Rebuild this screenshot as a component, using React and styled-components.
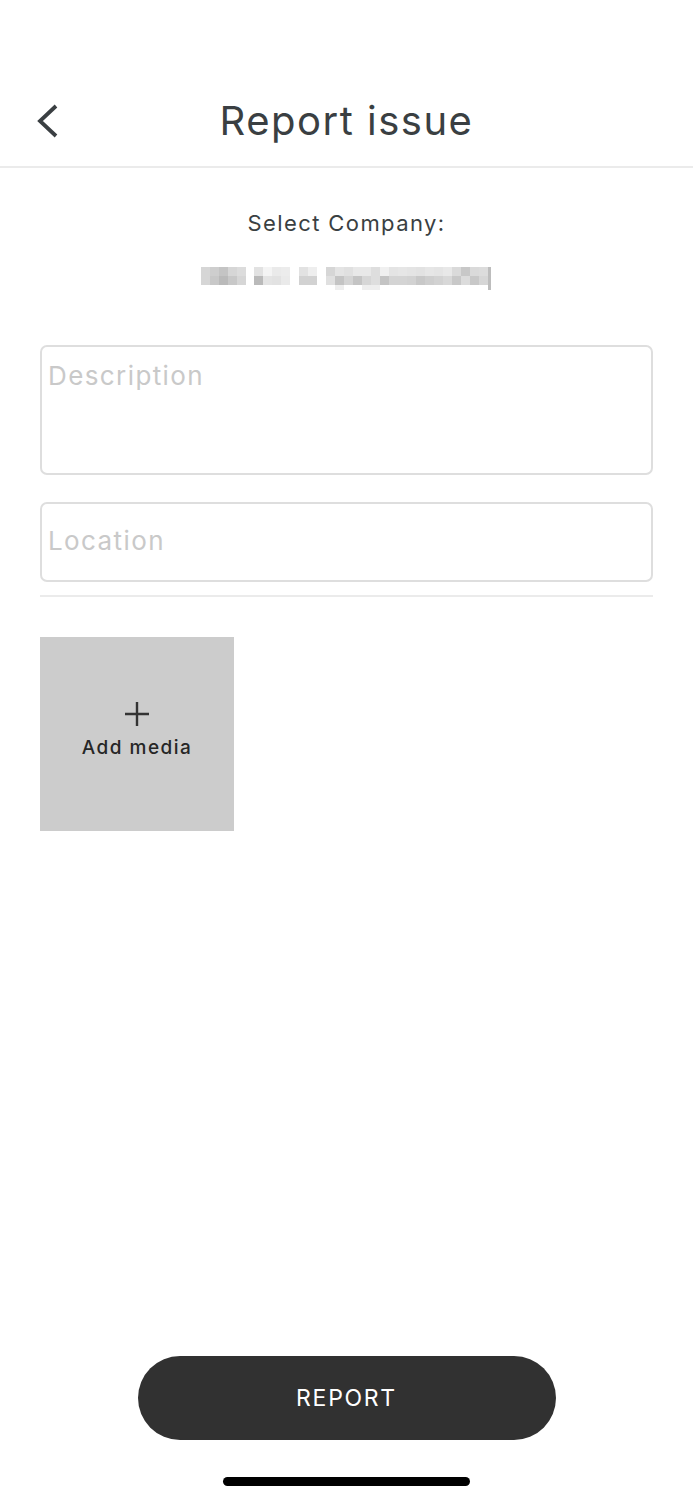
import React from "react";
import styled, { createGlobalStyle } from "styled-components";

const Global = createGlobalStyle`
  html, body { margin: 0; padding: 0; background: #fff; }
  body { font-family: "Inter", "Noto Sans", sans-serif; }
  * { box-sizing: border-box; }
`;

const Screen = styled.div`
  width: 693px;
  height: 1500px;
  display: flex;
  flex-direction: column;
  background: #fff;
  color: #3a3f42;
`;

const Header = styled.header`
  height: 168px;
  padding-top: 80px;
  border-bottom: 2px solid #ebebeb;
  display: grid;
  grid-template-columns: 80px 1fr 80px;
  align-items: center;
`;

const BackButton = styled.button`
  border: 0;
  background: none;
  padding: 0 0 4px 36px;
  display: flex;
  align-items: center;
  cursor: pointer;
`;

const Title = styled.h1`
  margin: 0 0 6px;
  text-align: center;
  font-weight: 400;
  font-size: 40px;
  letter-spacing: 1.5px;
  color: #3a3f42;
`;

const Body = styled.main`
  flex: 1;
  display: flex;
  flex-direction: column;
  padding: 40px 40px 0;
`;

const Label = styled.div`
  text-align: center;
  font-size: 22px;
  line-height: 30px;
  color: #3a3f42;
  letter-spacing: 1.4px;
`;

const MosaicWrap = styled.div`
  display: flex;
  justify-content: center;
  margin-top: 28px;
  margin-left: -2px;
`;

const Field = styled.div`
  border: 2px solid #dedede;
  border-radius: 7px;
  height: ${(p) => p.$h}px;
  padding: ${(p) => p.$pt}px 6px 0;
  font-size: 26px;
  color: #c9c9c9;
  letter-spacing: 1.4px;
  margin-top: ${(p) => p.$mt}px;
`;

const Rule = styled.div`
  height: 2px;
  background: #ebebeb;
  margin-top: 13px;
`;

const MediaTile = styled.button`
  margin-top: 40px;
  width: 194px;
  height: 194px;
  border: 0;
  background: #cccccc;
  display: flex;
  flex-direction: column;
  align-items: center;
  justify-content: center;
  gap: 9px;
  padding: 0 0 8px;
  font-family: inherit;
  font-size: 19px;
  font-weight: 500;
  color: #262626;
  letter-spacing: 1.5px;
`;

const Footer = styled.footer`
  display: flex;
  flex-direction: column;
  align-items: center;
  padding-bottom: 14px;
`;

const ReportButton = styled.button`
  width: 418px;
  height: 84px;
  border-radius: 42px;
  border: 0;
  background: #313131;
  color: #fff;
  font-family: inherit;
  font-size: 23px;
  letter-spacing: 1.7px;
`;

const HomeIndicator = styled.div`
  margin-top: 37px;
  width: 247px;
  height: 9px;
  border-radius: 5px;
  background: #000;
`;

const rows = [
  { x: 200, top: [214, 206, 196, 214, 220], bot: [214, 200, 186, 200, 214] },
  { x: 253, top: [226, 244, 234, 236], bot: [186, 228, 226, 234] },
  { x: 298, top: [226, 238], bot: [210, 210] },
  {
    x: 325,
    top: [214, 228, 224, 232, 232, 222, 240, 228, 230, 228, 226, 230, 228, 232, 218, 200, 218, 220],
    bot: [224, 196, 212, 196, 214, 222, 196, 212, 212, 210, 200, 206, 210, 216, 200, 220, 200, 214],
  },
];

function Mosaic() {
  const cell = 9;
  return (
    <svg width="292" height="26" viewBox="199 267 292 26">
      {rows.map((seg, i) =>
        seg.top.map((g, j) => (
          <g key={`${i}-${j}`}>
            <rect x={seg.x + j * cell} y={268} width={cell} height={9} fill={`rgb(${g},${g},${g})`} />
            <rect x={seg.x + j * cell} y={277} width={cell} height={9} fill={`rgb(${seg.bot[j]},${seg.bot[j]},${seg.bot[j]})`} />
          </g>
        ))
      )}
      <rect x={334} y={286} width={9} height={5} fill="#eeeeee" />
      <rect x={361} y={286} width={18} height={5} fill="#eeeeee" />
      <rect x={487} y={268} width={3} height={23} fill="#bdbdbd" />
    </svg>
  );
}

export default function App() {
  return (
    <>
      <Global />
      <Screen>
        <Header>
          <BackButton aria-label="Back">
            <svg width="24" height="36" viewBox="0 0 24 36">
              <path d="M20 3 L4 18 L20 33" fill="none" stroke="#3a3f42" strokeWidth="3.8" />
            </svg>
          </BackButton>
          <Title>Report issue</Title>
          <div />
        </Header>
        <Body>
          <Label>Select Company:</Label>
          <MosaicWrap>
            <Mosaic />
          </MosaicWrap>
          <Field $h={130} $pt={13} $mt={53}>Description</Field>
          <Field $h={80} $pt={21} $mt={27}>Location</Field>
          <Rule />
          <MediaTile>
            <svg width="26" height="26" viewBox="0 0 26 26">
              <path d="M13 1 V25 M1 13 H25" stroke="#333" strokeWidth="2.4" />
            </svg>
            Add media
          </MediaTile>
        </Body>
        <Footer>
          <ReportButton>REPORT</ReportButton>
          <HomeIndicator />
        </Footer>
      </Screen>
    </>
  );
}
